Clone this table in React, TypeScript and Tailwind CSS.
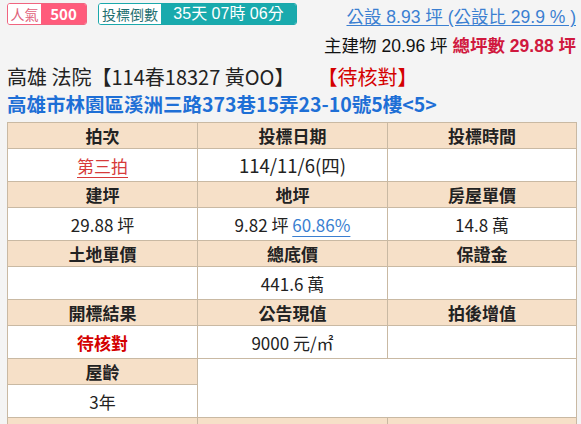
import type { ReactNode } from "react";

const cjk = { fontFamily: '"Noto Sans CJK TC", "Liberation Sans", sans-serif' };
const latin = { fontFamily: '"Liberation Sans", "Noto Sans CJK TC", sans-serif' };

function Th({ children }: { children?: ReactNode }) {
  return (
    <td className="h-[26px] border border-[#c9b9a3] bg-[#f6e0c8] p-0 text-center text-[17px] font-bold leading-none text-[#222]">
      {children}
    </td>
  );
}

function Td({ children, className = "" }: { children?: ReactNode; className?: string }) {
  return (
    <td className={`h-[33px] border border-[#c9b9a3] bg-white p-0 text-center text-[17px] leading-none text-[#222] ${className}`}>
      {children}
    </td>
  );
}

export default function App() {
  return (
    <div className="h-[424px] w-[581px] overflow-hidden bg-[#f4f4f4]" style={cjk}>
      <div className="flex justify-between pl-[7px] pr-[5px] pt-[3px]">
        <div className="flex gap-[11px]">
          <div className="flex h-[22px] overflow-hidden rounded-[3px] border border-[#f0647f] text-[14px]">
            <span className="flex w-[33px] items-center justify-center bg-white text-[#e0607a]">人氣</span>
            <span className="flex w-[45px] items-center justify-center bg-[#ff5b7b] text-[15px] font-bold text-white">500</span>
          </div>
          <div className="flex h-[22px] overflow-hidden rounded-[3px] border border-[#1aa8ab] text-[14px]">
            <span className="flex w-[62px] items-center justify-center bg-white text-[#1f6f70]">投標倒數</span>
            <span
              className="flex w-[135px] items-center justify-center whitespace-nowrap bg-[#19aaad] text-[16px] text-white"
              style={latin}
            >
              35天 07時 06分
            </span>
          </div>
        </div>
        <div className="flex flex-col items-end" style={latin}>
          <span className="mt-[2px] text-[17.5px] leading-[24px] text-[#3b7fd1] underline underline-offset-2">
            公設 8.93 坪 (公設比 29.9 % )
          </span>
          <span className="mt-[7px] text-[17.5px] leading-[20px] text-[#111]">
            主建物 20.96 坪 <b className="text-[#d0183e]">總坪數 29.88 坪</b>
          </span>
        </div>
      </div>

      <div className="mt-[7px] flex items-center pl-[7px] text-[20px] leading-[28px] text-[#222]">
        <span>高雄 法院【114春18327 黃OO】</span>
        <span className="ml-[23px] text-[#d40000]">【待核對】</span>
      </div>
      <div className="pl-[7px] text-[19.5px] font-bold leading-[26px] text-[#1e6fd6]">
        高雄市林園區溪洲三路373巷15弄23-10號5樓&lt;5&gt;
      </div>

      <table className="ml-[7px] mt-[5px] w-[569px] table-fixed border-collapse">
        <colgroup>
          <col className="w-[190px]" />
          <col className="w-[190px]" />
          <col className="w-[189px]" />
        </colgroup>
        <tbody>
          <tr>
            <Th>拍次</Th>
            <Th>投標日期</Th>
            <Th>投標時間</Th>
          </tr>
          <tr>
            <Td>
              <span className="text-[#d63a3a] underline underline-offset-4">第三拍</span>
            </Td>
            <Td className="text-[18.5px]">114/11/6(四)</Td>
            <Td />
          </tr>
          <tr>
            <Th>建坪</Th>
            <Th>地坪</Th>
            <Th>房屋單價</Th>
          </tr>
          <tr>
            <Td>29.88 坪</Td>
            <Td>
              9.82 坪 <span className="text-[#3b7fd1] underline underline-offset-4">60.86%</span>
            </Td>
            <Td>14.8 萬</Td>
          </tr>
          <tr>
            <Th>土地單價</Th>
            <Th>總底價</Th>
            <Th>保證金</Th>
          </tr>
          <tr>
            <Td />
            <Td>441.6 萬</Td>
            <Td />
          </tr>
          <tr>
            <Th>開標結果</Th>
            <Th>公告現值</Th>
            <Th>拍後增值</Th>
          </tr>
          <tr>
            <Td className="font-bold">
              <span className="text-[#d40000]">待核對</span>
            </Td>
            <Td>9000 元/㎡</Td>
            <Td />
          </tr>
          <tr>
            <Th>屋齡</Th>
            <td rowSpan={2} colSpan={2} className="border border-[#c9b9a3] bg-white p-0" />
          </tr>
          <tr>
            <Td>3年</Td>
          </tr>
          <tr>
            <Th>&nbsp;</Th>
            <Th>&nbsp;</Th>
            <Th>&nbsp;</Th>
          </tr>
        </tbody>
      </table>
    </div>
  );
}
